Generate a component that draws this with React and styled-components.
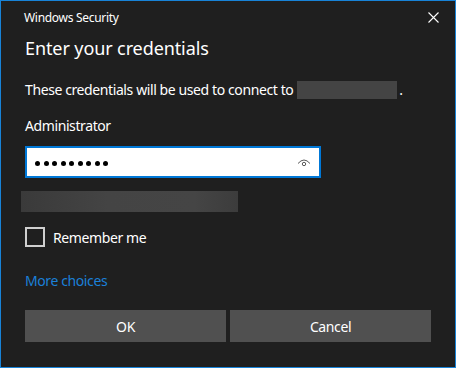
import React from 'react'
import styled, { createGlobalStyle } from 'styled-components'

const Global = createGlobalStyle`
  html, body {
    margin: 0;
    padding: 0;
    background: #1f1f1f;
  }
  * { box-sizing: border-box; }
`

const Window = styled.div`
  width: 456px;
  height: 368px;
  border: 1px solid #1883d7;
  background: #1f1f1f;
  color: #ffffff;
  font-family: "Segoe UI", "Noto Sans", sans-serif;
  letter-spacing: -0.4px;
  display: flex;
  flex-direction: column;
`

const TitleBar = styled.div`
  height: 32px;
  display: flex;
  align-items: center;
  justify-content: space-between;
  padding: 0 16px 0 23px;
`

const Title = styled.span`
  font-size: 12px;
  letter-spacing: -0.3px;
  color: #ffffff;
`

const CloseButton = styled.button`
  width: 12px;
  height: 12px;
  padding: 0;
  border: 0;
  background: transparent;
  display: flex;
  align-items: center;
  justify-content: center;
`

const Body = styled.div`
  display: flex;
  flex-direction: column;
  padding: 0 23px 0 24px;
`

const Heading = styled.h1`
  margin: 3px 0 0;
  font-size: 18px;
  line-height: 24px;
  font-weight: 400;
  letter-spacing: -0.1px;
`

const Text = styled.p`
  margin: ${p => p.$top}px 0 0;
  font-size: 14px;
  line-height: 20px;
  white-space: nowrap;
  display: flex;
  align-items: center;
`

const Redacted = styled.span`
  display: inline-block;
  width: 100px;
  height: 18px;
  margin: 0 2px 0 4px;
  background: #444444;
`

const Field = styled.div`
  margin-top: 10px;
  width: 296px;
  height: 32px;
  border: 2px solid #0078d7;
  background: #ffffff;
  display: flex;
  align-items: center;
  justify-content: space-between;
  padding: 0 8px 0 8px;
`

const Dots = styled.div`
  display: flex;
  gap: 3.5px;
  padding-top: 2px;
`

const Dot = styled.span`
  width: 5px;
  height: 5px;
  border-radius: 50%;
  background: #000000;
`

const Blur = styled.div`
  margin: 13px 0 0 -4px;
  width: 217px;
  height: 21px;
  background: linear-gradient(90deg, #3a3a3a, #444444 40%, #454545 80%, #3c3c3c);
  filter: blur(0.6px);
`

const CheckRow = styled.label`
  margin-top: 15px;
  display: flex;
  align-items: center;
  gap: 8px;
  font-size: 14px;
`

const Box = styled.span`
  width: 20px;
  height: 20px;
  border: 2px solid #cfcfcf;
`

const Link = styled.a`
  margin-top: 24px;
  font-size: 14px;
  line-height: 20px;
  color: #1b80d8;
  text-decoration: none;
`

const Buttons = styled.div`
  margin-top: 19px;
  display: grid;
  grid-template-columns: 201px 201px;
  gap: 4px;
`

const Button = styled.button`
  height: 32px;
  border: 0;
  background: #505050;
  color: #ffffff;
  font-family: "Segoe UI", "Noto Sans", sans-serif;
  font-size: 14px;
  letter-spacing: -0.4px;
`

const Eye = () => (
  <svg width="14" height="9" viewBox="0 0 14 9" fill="none" stroke="#5a5a5a" strokeWidth="1">
    <path d="M1 5.5 Q7 -1.5 13 5.5" />
    <circle cx="7" cy="6" r="1.7" />
  </svg>
)

export default function App() {
  return (
    <>
      <Global />
      <Window>
        <TitleBar>
          <Title>Windows Security</Title>
          <CloseButton>
            <svg width="11" height="11" viewBox="0 0 11 11" stroke="#ffffff" strokeWidth="1.1">
              <path d="M0.5 0.5 L10.5 10.5 M10.5 0.5 L0.5 10.5" />
            </svg>
          </CloseButton>
        </TitleBar>
        <Body>
          <Heading>Enter your credentials</Heading>
          <Text $top={20}>
            These credentials will be used to connect to<Redacted />.
          </Text>
          <Text $top={16}>Administrator</Text>
          <Field>
            <Dots aria-label="password">
              {Array.from({ length: 9 }).map((_, i) => <Dot key={i} />)}
            </Dots>
            <Eye />
          </Field>
          <Blur />
          <CheckRow>
            <Box />
            Remember me
          </CheckRow>
          <Link href="#">More choices</Link>
          <Buttons>
            <Button>OK</Button>
            <Button>Cancel</Button>
          </Buttons>
        </Body>
      </Window>
    </>
  )
}
